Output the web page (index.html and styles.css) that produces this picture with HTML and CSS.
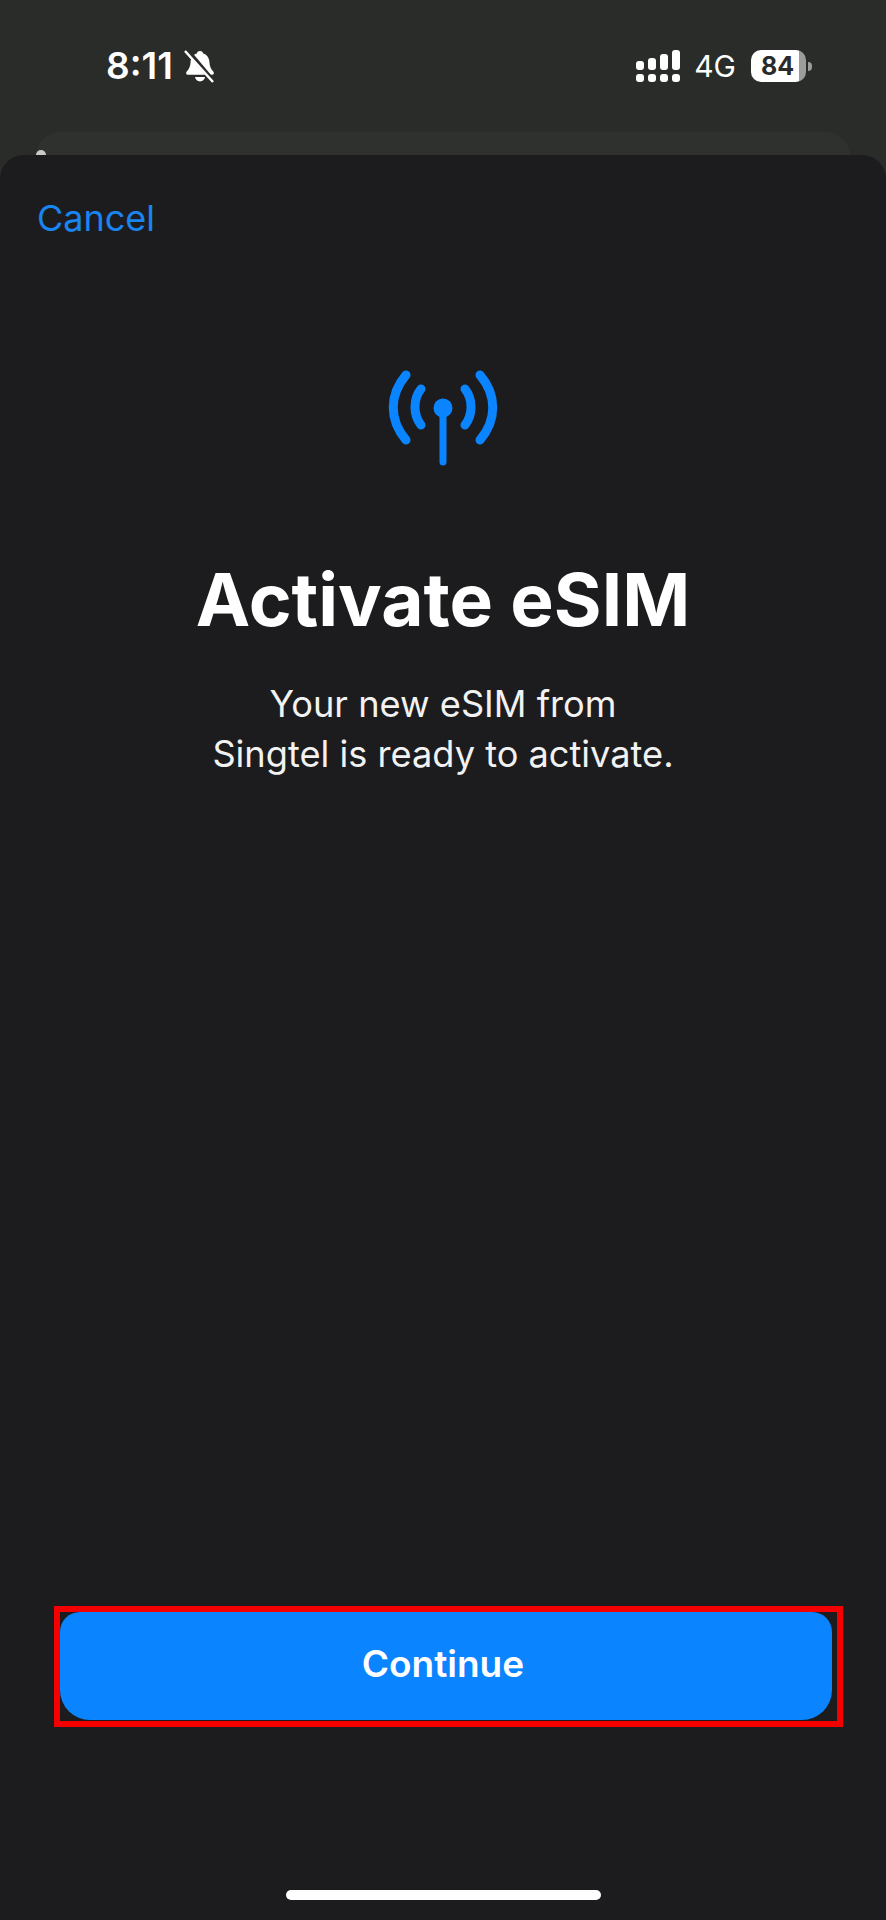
FILE: index.html
```html
<!DOCTYPE html>
<html>
<head>
  <title>Activate eSIM</title>
  <link rel="stylesheet" href="styles.css">
</head>
<body>
  <div class="status-bar">
    <div class="status-left">
      <span class="time">8:11</span>
      <svg class="bell" viewBox="0 0 32 34" width="32" height="34">
        <path d="M16 2c1.800 0 3 1.100 3.200 2.500 4 1.300 6 4.500 6.200 8.500.2 4.500 1.600 7 4 9.700 1 1.200.4 3-1.200 3H3.800c-1.600 0-2.200-1.800-1.200-3 2.400-2.700 3.800-5.200 4-9.700.2-4 2.200-7.200 6.200-8.500C13 3.100 14.200 2 16 2z" fill="#fff"/>
        <path d="M11 28h10c-.4 2.500-2.400 4.400-5 4.400S11.400 30.500 11 28z" fill="#fff"/>
        <path d="M3 1l27 32" stroke="#2a2d2a" stroke-width="4.500"/>
        <path d="M1 2l28 31" stroke="#fff" stroke-width="2.500"/>
      </svg>
    </div>
    <div class="status-right">
      <svg class="signal" viewBox="0 0 44 32" width="44" height="32">
        <rect x="0" y="24" width="8" height="8" rx="3" fill="#fff"/>
        <rect x="12" y="24" width="8" height="8" rx="3" fill="#fff"/>
        <rect x="24" y="24" width="8" height="8" rx="3" fill="#fff"/>
        <rect x="36" y="24" width="8" height="8" rx="3" fill="#fff"/>
        <rect x="0" y="11" width="8" height="9" rx="3" fill="#fff"/>
        <rect x="12" y="8" width="8" height="12" rx="3" fill="#fff"/>
        <rect x="24" y="4" width="8" height="16" rx="3" fill="#fff"/>
        <rect x="36" y="0" width="8" height="20" rx="3" fill="#fff"/>
      </svg>
      <span class="network">4G</span>
      <div class="battery">
        <div class="battery-body"><span class="battery-level">84</span></div>
        <div class="battery-nub"></div>
      </div>
    </div>
  </div>

  <div class="back-card"><div class="back-mark"></div></div>

  <div class="sheet">
    <div class="sheet-top">
      <a class="cancel">Cancel</a>
    </div>
    <div class="intro">
      <svg class="antenna" viewBox="0 0 110 100" width="110" height="100" fill="none" stroke="#0a84ff" stroke-linecap="round" stroke-width="9">
        <path d="M18 8C1 28 1 53 18 73"/>
        <path d="M92 8c17 20 17 45 0 65"/>
        <path d="M33 22c-8 10-8 26 0 36"/>
        <path d="M77 22c8 10 8 26 0 36"/>
        <path d="M55 41v54" stroke-width="7"/>
        <circle cx="55" cy="41" r="9.500" fill="#0a84ff" stroke="none"/>
      </svg>
      <h1 class="title">Activate eSIM</h1>
      <p class="subtitle">Your new eSIM from<br>Singtel is ready to activate.</p>
    </div>
    <div class="action-box">
      <button class="continue">Continue</button>
    </div>
    <div class="home-bar"></div>
  </div>
</body>
</html>
```

FILE: styles.css
```css
* {
    box-sizing: border-box;
}
body {
    margin: 0;
    width: 886px;
    height: 1920px;
    overflow: hidden;
    font-family: Inter, "Liberation Sans", sans-serif;
    color: #fff;
    background-color: #292c28;
}
.status-bar {
    height: 132px;
    display: flex;
    justify-content: space-between;
    align-items: flex-start;
    padding: 49px 74px 0 106px;
}
.status-left {
    display: flex;
    align-items: center;
    gap: 11px;
}
.time {
    font-size: 37px;
    font-weight: 600;
    line-height: 34px;
}
.status-right {
    display: flex;
    align-items: center;
    height: 34px;
}
.signal {
    margin-right: 14px;
}
.network {
    font-size: 30px;
    line-height: 34px;
    margin-right: 15px;
}
.battery {
    display: flex;
    align-items: center;
    gap: 2px;
}
.battery-body {
    width: 55px;
    height: 32px;
    border-radius: 10px;
    background: linear-gradient(to right, #fff 48px, #9b9d9b 48px);
    padding-left: 10px;
}
.battery-level {
    color: #2a2a2a;
    font-size: 25px;
    font-weight: 700;
    line-height: 32px;
}
.battery-nub {
    width: 4px;
    height: 9px;
    border-radius: 0 4px 4px 0;
    background-color: #9b9d9b;
}
.back-card {
    height: 60px;
    margin: 0 36px;
    border-radius: 24px 24px 0 0;
    background-color: #2e312d;
    padding: 18px 0 0 0;
}
.back-mark {
    width: 10px;
    height: 6px;
    background-color: #c9c9c9;
    border-radius: 8px 8px 0 0;
}
.sheet {
    position: absolute;
    top: 155px;
    left: 0;
    width: 886px;
    height: 1765px;
    border-radius: 24px 24px 0 0;
    background-color: #1c1c1e;
    display: flex;
    flex-direction: column;
}
.sheet-top {
    height: 64px;
    padding: 41px 0 0 37px;
}
.cancel {
    color: #1a84f0;
    font-size: 36px;
    line-height: 44px;
}
.intro {
    display: flex;
    flex-direction: column;
    align-items: center;
    padding-top: 148px;
}
.title {
    margin: 93px 0 0;
    font-size: 73px;
    font-weight: 700;
    line-height: 80px;
}
.subtitle {
    margin: 39px 0 0;
    text-align: center;
    font-size: 36.200px;
    line-height: 50px;
    color: #f2f2f2;
}
.action-box {
    margin: auto 43px 0 54px;
    height: 121px;
    padding: 0 5px 1px 0;
    border: 6px solid #f50000;
}
.continue {
    display: block;
    width: 100%;
    height: 108px;
    border: none;
    border-radius: 20px 20px 30px 30px;
    background-color: #0a84ff;
    color: #fff;
    font-family: Inter, "Liberation Sans", sans-serif;
    font-size: 37px;
    font-weight: 600;
    padding: 0 6px 6px 0;
}
.home-bar {
    width: 315px;
    height: 10px;
    border-radius: 5px;
    background-color: #fff;
    margin: 163px auto 20px;
}
```
